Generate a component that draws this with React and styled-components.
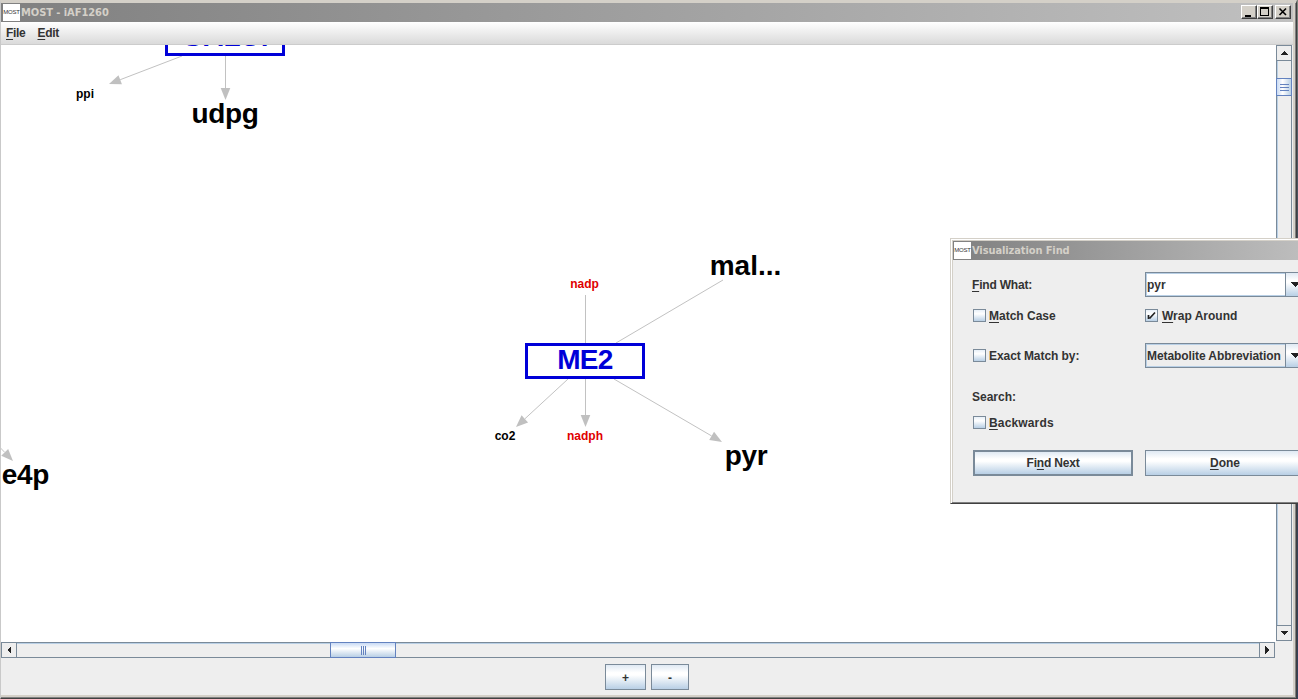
import React from 'react';
import styled, { createGlobalStyle, css } from 'styled-components';

const Global = createGlobalStyle`
  * { box-sizing: border-box; }
  body { margin: 0; overflow: hidden; background: #3c3c3c; }
`;

const metal = 'linear-gradient(#dfe9f3 0%, #ffffff 32%, #ffffff 42%, #b8cfe5 100%)';

const Desktop = styled.div`
  position: relative;
  width: 1298px;
  height: 699px;
  overflow: hidden;
  background: linear-gradient(#7c857c, #5a6470 15%, #3e4654 40%, #33415c);
  font: bold 12px/14px "Liberation Sans", Arial, sans-serif;
  color: #333;
  white-space: nowrap;
  u { text-underline-offset: 2px; text-decoration-thickness: 1px; }
`;
const Window = styled.div`
  width: 1297px;
  height: 699px;
  display: flex;
  flex-direction: column;
  background: #eee;
  padding: 0 3px 3px 0;
  border: solid;
  border-width: 3px 1px 1px 1px;
  border-color: #d4d0c8 #404040 #404040 #c9c9c9;
  box-shadow: inset -1px -1px #808080, inset -3px -3px #d4d0c8;
`;
const TitleBar = styled.div`
  flex: none;
  height: ${p => p.$h}px;
  display: flex;
  align-items: center;
  padding-left: ${p => p.$pad}px;
  background: linear-gradient(90deg, #808080, ${p => p.$end});
  color: #d4d0c8;
  font: bold 11px/18px "DejaVu Sans Condensed", "DejaVu Sans", sans-serif;
  letter-spacing: ${p => p.$ls}px;
`;
const AppIcon = styled.span`
  width: 17px;
  height: 17px;
  flex: none;
  margin-right: 1px;
  background: #fff;
  color: #333;
  font: 6px/17px "Liberation Sans", Arial, sans-serif;
  letter-spacing: -0.2px;
  text-align: center;
`;
const Controls = styled.div`
  margin-left: auto;
  display: flex;
  padding-right: 2px;
  margin-top: -1px;
  button:last-child { margin-left: 2px; }
`;
const Control = styled.button`
  width: 16px;
  height: 14px;
  padding: 0;
  display: flex;
  background: #d4d0c8;
  border: 1px solid;
  border-color: #fff #404040 #404040 #fff;
  box-shadow: inset -1px -1px #808080;
`;
const MenuBar = styled.div`
  flex: none;
  height: 23px;
  display: flex;
  gap: 12px;
  padding: 4px 0 0 5px;
  background: linear-gradient(#fff, #dadada);
  border-bottom: 1px solid #ccc;
`;
const Label = styled.span`
  letter-spacing: ${p => p.$ls || 0}px;
`;
const Body = styled.div`
  display: grid;
  grid-template-columns: 1275px 16px;
  grid-template-rows: 597px 16px;
`;
const Canvas = styled.div`
  position: relative;
  overflow: hidden;
  background: #fff;
  svg { display: block; }
`;
const Node = styled.div`
  position: absolute;
  left: ${p => p.$x - 1}px;
  top: ${p => p.$y - 45}px;
  transform: translate(-50%, -50%);
  color: ${p => p.$color || '#000'};
  letter-spacing: ${p => p.$ls || 0}px;
  ${p => p.$big && css`font-size: 28px; line-height: 32px;`}
`;
const Reaction = styled.div`
  position: absolute;
  left: ${p => p.$x - 1}px;
  top: ${p => p.$y - 45}px;
  width: 120px;
  height: 36px;
  border: 3px solid #0000d8;
  background: #fff;
  color: #0000d8;
  font-size: 28px;
  line-height: 28px;
  letter-spacing: ${p => p.$ls || 0}px;
  text-align: center;
`;
const VBar = styled.div`
  display: flex;
  flex-direction: column;
  margin-bottom: 1px;
  border: 1px solid #7a8a99;
  background: #eee;
  box-shadow: inset 1px 0 #b8cfe5;
`;
const HBar = styled.div`
  display: flex;
  margin-right: 1px;
  border: 1px solid #7a8a99;
  background: #eee;
  box-shadow: inset 0 1px #b8cfe5;
`;
const ArrowBox = styled.div`
  flex: none;
  width: ${p => p.$w}px;
  height: ${p => p.$h}px;
  display: flex;
  align-items: center;
  justify-content: center;
  background: #eee;
  border: 0 solid #7a8a99;
  ${p => p.$edge && `border-${p.$edge}-width: 1px;`}
`;
const Track = styled.div`
  flex: ${p => (p.$size ? `0 0 ${p.$size}px` : '1')};
`;
const Thumb = styled.div`
  flex: none;
  display: flex;
  align-items: center;
  justify-content: center;
  border: 1px solid #6382bf;
  ${p => (p.$vertical
    ? css`height: 18px; margin: 0 -1px; background: linear-gradient(90deg, #c8daf4, #fff 40%, #b8cfe5);`
    : css`width: 66px; margin: -1px 0; background: linear-gradient(#c8daf4, #fff 40%, #b8cfe5);`)}
`;
const Footer = styled.div`
  flex: 1;
  display: flex;
  gap: 5px;
  padding: 6px 0 0 604px;
`;
const Button = styled.button`
  width: ${p => p.$w}px;
  height: 26px;
  flex: none;
  padding: ${p => p.$drop || 0}px 0 0;
  color: #333;
  font: inherit;
  letter-spacing: ${p => p.$ls || 0}px;
  background: ${metal};
  border: ${p => (p.$default ? 2 : 1)}px solid #7a8a99;
`;
const Dialog = styled.div`
  position: absolute;
  left: 950px;
  top: 238px;
  width: 370px;
  height: 266px;
  background: #eee;
  border: 1px solid;
  border-color: #d4d0c8 #404040 #404040 #d4d0c8;
  box-shadow: inset 1px 1px #fff, inset 0 -1px #808080, inset 2px 2px #d4d0c8;
  padding: 2px;
`;
const Form = styled.div`
  display: grid;
  grid-template-columns: 160px 160px;
  column-gap: 12px;
  grid-template-rows: 26px 36px 44px 38px 14px 20px 26px;
  align-items: center;
  padding: 12px 0 0 20px;
`;
const Check = styled.label`
  display: flex;
  align-items: center;
  gap: ${p => p.$gap || 3}px;
`;
const Box = styled.span`
  width: 13px;
  height: 13px;
  margin-bottom: 2px;
  display: flex;
  background: linear-gradient(#e8f0f8, #fff 35%, #b8cfe5);
  border: 1px solid #7a8a99;
`;
const Combo = styled.div`
  display: flex;
  height: 25px;
  width: 161px;
  margin-bottom: 1px;
  align-items: center;
  border: 1px solid #7a8a99;
  background: ${p => (p.$edit ? '#fff' : '#eee')};
  box-shadow: inset 1px 1px #b8cfe5, inset 0 -1px #b8cfe5;
  padding-left: 1px;
  letter-spacing: ${p => p.$ls || 0}px;
`;
const Drop = styled.div`
  margin-left: auto;
  width: 20px;
  height: 23px;
  display: flex;
  align-items: center;
  padding-left: 4px;
  border-left: 1px solid #7a8a99;
  background: ${metal};
`;
const FormLabel = styled(Label)`
  margin-left: -1px;
`;
const Spacer = styled.span`
  grid-column: 1 / -1;
`;

const Arrow = ({ d, w, h }) => (
  <svg width={w} height={h} shapeRendering="crispEdges"><path d={d} fill="#222" /></svg>
);

const edges = [
  [182, 56, 109, 84, true], [225.5, 56, 225.5, 100, true],
  [585.5, 295, 585.5, 343], [723, 280, 616, 343],
  [568, 379, 516, 427, true], [585.5, 379, 585.5, 427, true],
  [614, 379, 722, 442, true], [-10, 437, 13, 461, true],
];

const Edge = ({ e: [x1, y1, x2, y2, head] }) => {
  const a = Math.atan2(y2 - y1, x2 - x1);
  const bx = x2 - Math.cos(a) * 12, by = y2 - Math.sin(a) * 12;
  const dx = -Math.sin(a) * 4.8, dy = Math.cos(a) * 4.8;
  return (
    <g>
      <line x1={x1} y1={y1} x2={head ? bx : x2} y2={head ? by : y2} stroke="#c2c2c2" />
      {head && <path d={`M${x2} ${y2}L${bx + dx} ${by + dy}L${bx - dx} ${by - dy}Z`} fill="#c0c0c0" />}
    </g>
  );
};

export default function App() {
  return (
    <Desktop>
      <Global />
      <Window>
        <TitleBar $h={19} $pad={2} $end="#c0c0c0" $ls={-0.05}>
          <AppIcon>MOST</AppIcon>MOST - iAF1260
          <Controls>
            <Control><svg width="14" height="12"><path d="M3 9h6v2H3z" /></svg></Control>
            <Control><svg width="14" height="12" shapeRendering="crispEdges"><path d="M2 1h9v9H2zM3 3v6h7V3z" fillRule="evenodd" /></svg></Control>
            <Control><svg width="14" height="12"><path d="M3.500 2.500l6.500 6.500M10 2.500L3.500 9" stroke="#000" strokeWidth="1.6" /></svg></Control>
          </Controls>
        </TitleBar>
        <MenuBar>
          <Label $ls={-0.3}><u>F</u>ile</Label>
          <Label $ls={-0.3}><u>E</u>dit</Label>
        </MenuBar>
        <Body>
          <Canvas>
            <svg width="1275" height="597" viewBox="1 45 1275 597">
              {edges.map((e, i) => <Edge key={i} e={e} />)}
            </svg>
            <Reaction $x={165} $y={20}>GALUi</Reaction>
            <Reaction $x={525} $y={343} $ls={-0.7}>ME2</Reaction>
            <Node $x={85} $y={94}>ppi</Node>
            <Node $x={225} $y={114} $big $ls={-0.3}>udpg</Node>
            <Node $x={584.5} $y={284} $color="#e00000">nadp</Node>
            <Node $x={745.5} $y={266} $big>mal...</Node>
            <Node $x={505} $y={436}>co2</Node>
            <Node $x={585} $y={436} $color="#e00000">nadph</Node>
            <Node $x={746} $y={456} $big $ls={-0.3}>pyr</Node>
            <Node $x={25.5} $y={475} $big $ls={-0.3}>e4p</Node>
          </Canvas>
          <VBar>
            <ArrowBox $w={14} $h={15} $edge="bottom"><Arrow w={8} h={4} d="M0 4L4 0L8 4z" /></ArrowBox>
            <Track $size={17} />
            <Thumb $vertical><svg width="9" height="7" shapeRendering="crispEdges"><path d="M0 .5h9M0 3.500h9M0 6.500h9" stroke="#6382bf" /></svg></Thumb>
            <Track />
            <ArrowBox $w={14} $h={15} $edge="top"><Arrow w={8} h={4} d="M0 0L4 4L8 0z" /></ArrowBox>
          </VBar>
          <HBar>
            <ArrowBox $w={15} $h={14} $edge="right"><Arrow w={4} h={8} d="M4 0L0 4L4 8z" /></ArrowBox>
            <Track $size={313} />
            <Thumb><svg width="5" height="9" shapeRendering="crispEdges"><path d="M.5 0v9M2.500 0v9M4.500 0v9" stroke="#6382bf" /></svg></Thumb>
            <Track />
            <ArrowBox $w={15} $h={14} $edge="left"><Arrow w={4} h={8} d="M0 0L4 4L0 8z" /></ArrowBox>
          </HBar>
        </Body>
        <Footer>
          <Button $w={41} $drop={2}>+</Button>
          <Button $w={38} $drop={2}>-</Button>
        </Footer>
      </Window>
      <Dialog>
        <TitleBar $h={19} $pad={1} $end="#c0c0c0" $ls={-0.1}><AppIcon>MOST</AppIcon>Visualization Find</TitleBar>
        <Form>
          <FormLabel $ls={-0.2}><u>F</u>ind What:</FormLabel>
          <Combo $edit>pyr<Drop><Arrow w={10} h={5} d="M0 0L5 5L10 0z" /></Drop></Combo>
          <Check><Box /><Label><u>M</u>atch Case</Label></Check>
          <Check $gap={4}><Box><svg width="11" height="11"><path d="M2.500 5v4M3.500 8.500L9 2.500" stroke="#222" strokeWidth="1.7" fill="none" /></svg></Box><Label><u>W</u>rap Around</Label></Check>
          <Check><Box /><Label $ls={-0.07}>Exact Match by:</Label></Check>
          <Combo $ls={-0.08}>Metabolite Abbreviation<Drop><Arrow w={10} h={5} d="M0 0L5 5L10 0z" /></Drop></Combo>
          <FormLabel>Search:</FormLabel><span />
          <Check><Box /><Label $ls={0.15}><u>B</u>ackwards</Label></Check><span />
          <Spacer />
          <Button $w={160} $default $ls={-0.2}><span>Fi<u>n</u>d Next</span></Button>
          <Button $w={160}><u>D</u>one</Button>
        </Form>
      </Dialog>
    </Desktop>
  );
}
